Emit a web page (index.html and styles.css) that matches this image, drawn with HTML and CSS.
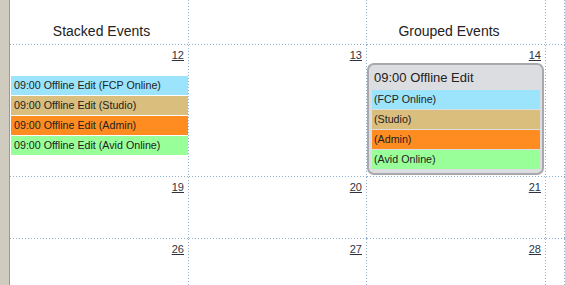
FILE: index.html
```html
<!DOCTYPE html>
<html lang="en">
<head>
  <meta charset="UTF-8" />
  <title>Schedule</title>
  <link rel="stylesheet" href="styles.css">
</head>
<body>
  <div class="strip"></div>
  <div class="calendar">
    <div class="cell head stacked">Stacked Events</div>
    <div class="cell head"></div>
    <div class="cell head grouped">Grouped Events</div>
    <div class="cell head"></div>

    <div class="cell">
      <a class="day" href="#">12</a>
      <div class="stack">
        <div class="event fcp">09:00 Offline Edit (FCP Online)</div>
        <div class="event studio">09:00 Offline Edit (Studio)</div>
        <div class="event admin">09:00 Offline Edit (Admin)</div>
        <div class="event avid">09:00 Offline Edit (Avid Online)</div>
      </div>
    </div>
    <div class="cell"><a class="day" href="#">13</a></div>
    <div class="cell">
      <a class="day" href="#">14</a>
      <div class="group">
        <div class="group-title">09:00 Offline Edit</div>
        <div class="event fcp">(FCP Online)</div>
        <div class="event studio">(Studio)</div>
        <div class="event admin">(Admin)</div>
        <div class="event avid">(Avid Online)</div>
      </div>
    </div>
    <div class="cell"></div>

    <div class="cell"><a class="day" href="#">19</a></div>
    <div class="cell"><a class="day" href="#">20</a></div>
    <div class="cell"><a class="day" href="#">21</a></div>
    <div class="cell"></div>

    <div class="cell"><a class="day" href="#">26</a></div>
    <div class="cell"><a class="day" href="#">27</a></div>
    <div class="cell"><a class="day" href="#">28</a></div>
    <div class="cell"></div>
  </div>
</body>
</html>
```

FILE: styles.css
```css
body {
  margin: 0;
  display: flex;
  height: 100vh;
  overflow: hidden;
  background: #fff;
  font-family: 'Liberation Sans', Arial, sans-serif;
  color: #222;
}
.strip {
  width: 9px;
  flex: none;
  background: #cfccbf;
  border-right: 1px solid #999;
}
.calendar {
  flex: 1;
  display: grid;
  grid-template-columns: 179px 178px 179px 1fr;
  grid-template-rows: 45px 132px 62px 62px;
}
/* dotted grid lines, 1px dot every 3px */
.cell {
  display: flex;
  flex-direction: column;
  background-image:
    linear-gradient(to right, #8fb0cf 1px, transparent 1px),
    linear-gradient(to bottom, #8fb0cf 1px, transparent 1px);
  background-size: 3px 1px, 1px 3px;
  background-repeat: repeat-x, repeat-y;
  background-position: left bottom, right top;
}
.head {
  font-size: 14px;
  line-height: 16px;
  padding-top: 23px;
  text-align: center;
  box-sizing: border-box;
}
.head.stacked {
  padding-left: 4px;
}
.head.grouped {
  padding-right: 15px;
}
.day {
  align-self: flex-end;
  margin: 4px 5px 0 0;
  font-size: 11px;
  line-height: 13px;
  color: #2f3340;
}
.stack {
  margin: 14px 0 0 1px;
  margin-right: 1px;
}
.event {
  height: 19px;
  line-height: 19px;
  margin-bottom: 1px;
  padding-left: 3px;
  font-size: 10.7px;
  white-space: nowrap;
  overflow: hidden;
}
.fcp { background: #9ce4fb; }
.studio { background: #d9be7e; }
.admin { background: #ff8c20; }
.avid { background: #99ff99; }
.group {
  margin: 1px 2px 0 0;
  padding: 0 2px 3px 3px;
  background: #dcdde1;
  border: 2px solid #a9a9ad;
  border-radius: 7px;
}
.group-title {
  font-size: 13px;
  line-height: 25px;
  padding-left: 2px;
}
.group .event {
  padding-left: 2px;
}
```
